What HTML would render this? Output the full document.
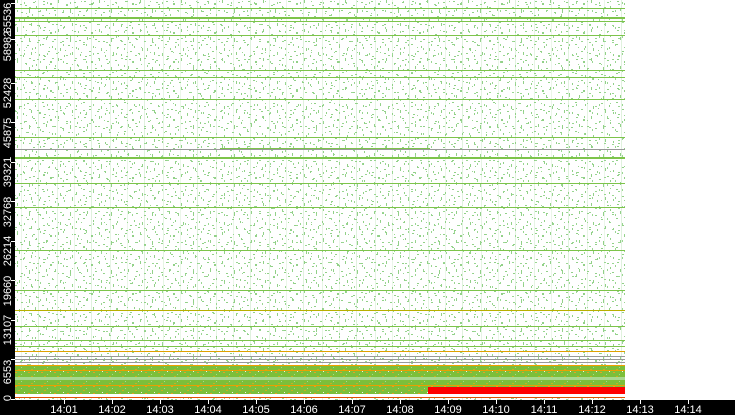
<!DOCTYPE html>
<html><head><style>
html,body{margin:0;padding:0;background:#fff;width:735px;height:415px;overflow:hidden}
svg{display:block}
text{font-family:"Liberation Sans",sans-serif;fill:#fff;font-size:11px}
</style></head><body>
<svg width="735" height="415" xmlns="http://www.w3.org/2000/svg">
<defs>
<pattern id="n" width="41" height="29" patternUnits="userSpaceOnUse">
<g fill="#92d088">
<rect x="2" y="1" width="2" height="1"/><rect x="9" y="3" width="2" height="2"/><rect x="17" y="0" width="1" height="3"/>
<rect x="25" y="5" width="2" height="1"/><rect x="33" y="2" width="2" height="1"/><rect x="5" y="8" width="1" height="3"/>
<rect x="13" y="10" width="2" height="1"/><rect x="21" y="12" width="2" height="1"/><rect x="29" y="9" width="1" height="4"/>
<rect x="38" y="11" width="2" height="1"/><rect x="1" y="15" width="2" height="1"/><rect x="11" y="17" width="1" height="2"/>
<rect x="19" y="19" width="1" height="3"/><rect x="27" y="16" width="2" height="1"/><rect x="35" y="18" width="1" height="2"/>
<rect x="7" y="22" width="2" height="1"/><rect x="15" y="24" width="2" height="1"/><rect x="23" y="26" width="1" height="2"/>
<rect x="31" y="23" width="1" height="3"/><rect x="39" y="25" width="1" height="2"/><rect x="3" y="27" width="2" height="1"/>
<rect x="36" y="6" width="1" height="2"/><rect x="24" y="21" width="1" height="1"/>
</g>
</pattern>
<pattern id="m" width="23" height="17" patternUnits="userSpaceOnUse">
<g fill="#9ad692">
<rect x="1" y="2" width="1" height="2"/><rect x="6" y="7" width="2" height="1"/><rect x="12" y="1" width="1" height="1"/>
<rect x="17" y="10" width="1" height="2"/><rect x="20" y="4" width="2" height="1"/><rect x="3" y="13" width="1" height="1"/>
<rect x="9" y="14" width="1" height="2"/><rect x="14" y="8" width="2" height="1"/>
</g>
</pattern>
<pattern id="v" width="53" height="400" patternUnits="userSpaceOnUse">
<g fill="#9ad692">
<rect x="4" y="0" width="1" height="400" opacity=".25"/><rect x="21" y="0" width="1" height="400" opacity=".2"/><rect x="38" y="0" width="1" height="400" opacity=".3"/>
</g>
</pattern>
<pattern id="b" width="13" height="7" patternUnits="userSpaceOnUse">
<rect width="13" height="7" fill="#7cbf3a"/>
<rect x="2" y="1" width="2" height="1" fill="#e8a020"/><rect x="8" y="3" width="1" height="1" fill="#a5d890"/>
<rect x="5" y="5" width="2" height="1" fill="#c8b020"/><rect x="11" y="0" width="1" height="1" fill="#f0f0f0"/>
</pattern>
</defs>
<rect x="15" y="0" width="610" height="400" fill="url(#v)"/>
<rect x="15" y="0" width="610" height="400" fill="url(#n)"/>
<rect x="15" y="0" width="610" height="400" fill="url(#m)"/>
<g fill="#7dc44a">
<rect x="15" y="8" width="610" height="1"/><rect x="15" y="17" width="610" height="2"/><rect x="15" y="21" width="610" height="1"/>
<rect x="15" y="35" width="610" height="1"/><rect x="15" y="70" width="610" height="1"/><rect x="15" y="77" width="610" height="1"/>
<rect x="15" y="99" width="610" height="1"/><rect x="15" y="137" width="610" height="1"/><rect x="15" y="157" width="610" height="2"/>
<rect x="15" y="183" width="610" height="1"/><rect x="15" y="207" width="610" height="1"/><rect x="15" y="250" width="610" height="1"/>
<rect x="15" y="290" width="610" height="1"/><rect x="15" y="326" width="610" height="1"/><rect x="15" y="340" width="610" height="1"/>
<rect x="15" y="346" width="610" height="1"/><rect x="220" y="148" width="210" height="2"/>
</g>
<g fill="#999"><rect x="15" y="149" width="610" height="1"/><rect x="15" y="356" width="610" height="1"/><rect x="15" y="359" width="610" height="1"/><rect x="15" y="362" width="610" height="1"/></g>
<rect x="15" y="310" width="610" height="1" fill="#b8b000"/>
<rect x="15" y="351" width="610" height="1" fill="#e0a000"/>
<rect x="15" y="365" width="610" height="33" fill="url(#b)"/>
<rect x="15" y="365" width="610" height="1" fill="#f0a000"/>
<rect x="15" y="370" width="610" height="1" fill="#e8a000"/>
<rect x="15" y="377" width="610" height="3" fill="#a8d890"/>
<rect x="15" y="385" width="610" height="1" fill="#e8a000"/>
<rect x="15" y="394" width="610" height="3" fill="#fff"/>
<rect x="15" y="397" width="610" height="1" fill="#e05000"/>
<rect x="428" y="387" width="197" height="7" fill="#ff0000"/>
<rect x="0" y="0" width="15" height="415" fill="#000"/>
<rect x="0" y="400" width="735" height="15" fill="#000"/>
<g stroke="#fff" stroke-width="1">
<path d="M11 399.5h4M11 359.5h4M11 320.5h4M11 280.5h4M11 241.5h4M11 201.5h4M11 162.5h4M11 122.5h4M11 83.5h4M11 39.5h4M11 3.5h4"/>
<path d="M64.5 400v4M112.5 400v4M160.5 400v4M208.5 400v4M256.5 400v4M304.5 400v4M352.5 400v4M400.5 400v4M448.5 400v4M496.5 400v4M544.5 400v4M592.5 400v4M640.5 400v4M688.5 400v4"/>
</g>
<g text-anchor="middle">
<text x="64" y="413">14:01</text><text x="112" y="413">14:02</text><text x="160" y="413">14:03</text><text x="208" y="413">14:04</text>
<text x="256" y="413">14:05</text><text x="304" y="413">14:06</text><text x="352" y="413">14:07</text><text x="400" y="413">14:08</text>
<text x="448" y="413">14:09</text><text x="496" y="413">14:10</text><text x="544" y="413">14:11</text><text x="592" y="413">14:12</text>
<text x="640" y="413">14:13</text><text x="688" y="413">14:14</text>
</g>
<g text-anchor="middle">
<text transform="translate(11,398) rotate(-90)">0</text>
<text transform="translate(11,372) rotate(-90)">6553</text>
<text transform="translate(11,330) rotate(-90)">13107</text>
<text transform="translate(11,291) rotate(-90)">19660</text>
<text transform="translate(11,251) rotate(-90)">26214</text>
<text transform="translate(11,212) rotate(-90)">32768</text>
<text transform="translate(11,172) rotate(-90)">39321</text>
<text transform="translate(11,133) rotate(-90)">45875</text>
<text transform="translate(11,93) rotate(-90)">52428</text>
<text transform="translate(11,46) rotate(-90)">58982</text>
<text transform="translate(11,18) rotate(-90)">65536</text>
</g>
</svg>
</body></html>
